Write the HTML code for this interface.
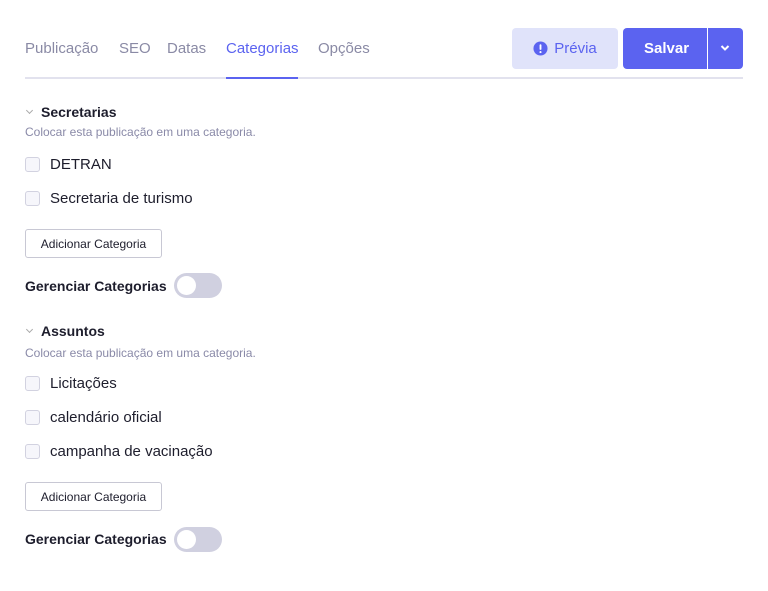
<!DOCTYPE html>
<html><head><style>
*{box-sizing:border-box;margin:0;padding:0}
body{width:768px;height:591px;background:#fff;font-family:"Liberation Sans",sans-serif;position:relative;overflow:hidden;color:#1d1d2c}
.a{position:absolute;white-space:nowrap}
.tab{font-size:15px;color:#8a8aa5;top:40px}
.line{left:25px;width:718px;top:77px;height:2px;background:#e2e2ee}
.act{left:226px;width:72px;top:77px;height:2px;background:#5b63f0}
.btn{border-radius:4px;font-size:15px;display:flex;align-items:center;justify-content:center;top:28px;height:41px}
.h{font-size:14px;font-weight:bold;color:#1d1d2c}
.sub{font-size:12px;color:#8a8aa8}
.cb{width:15px;height:15px;border:1px solid #d2d2e0;border-radius:3px;background:#f6f6fb;left:25px}
.lbl{font-size:15px;left:50px;color:#1d1d2c}
.add{left:25px;width:137px;height:29px;border:1px solid #c8c8d4;border-radius:3px;font-size:12px;display:flex;align-items:center;justify-content:center;color:#1d1d2c}
.tg{left:174px;width:48px;height:25px;border-radius:13px;background:#d0d0e0}
.tg:after{content:"";position:absolute;left:3px;top:3px;width:19px;height:19px;border-radius:50%;background:#fff}
.chev{left:27px;width:5px;height:5px;border-right:1.2px solid #aaa;border-bottom:1.2px solid #aaa;transform:rotate(45deg)}
</style></head><body>
<div class="a tab" style="left:25px">Publicação</div>
<div class="a tab" style="left:119px">SEO</div>
<div class="a tab" style="left:167px">Datas</div>
<div class="a tab" style="left:226px;color:#5b63f0">Categorias</div>
<div class="a tab" style="left:318px">Opções</div>
<div class="a line"></div><div class="a act"></div>
<div class="a btn" style="left:512px;width:106px;background:#e0e3fa;color:#5b63f0">
<svg width="15" height="15" viewBox="0 0 16 16" style="margin-right:6px"><circle cx="8" cy="8" r="7.5" fill="#5b63f0"/><rect x="7" y="3.5" width="2" height="6" rx="1" fill="#fff"/><circle cx="8" cy="11.8" r="1.1" fill="#fff"/></svg>Prévia</div>
<div class="a btn" style="left:623px;width:120px;background:#5b63f0;color:#fff;font-weight:bold;justify-content:flex-start;padding-left:21px">Salvar</div>
<div class="a" style="left:707px;top:28px;width:1px;height:41px;background:#fff"></div>
<svg class="a" style="left:720px;top:44px" width="10" height="8" viewBox="0 0 10 8"><path d="M1.5 2 L5 5.5 L8.5 2" stroke="#fff" stroke-width="2" fill="none"/></svg>

<div class="a chev" style="top:108px"></div>
<div class="a h" style="left:41px;top:104px">Secretarias</div>
<div class="a sub" style="left:25px;top:125px">Colocar esta publicação em uma categoria.</div>
<div class="a cb" style="top:157px"></div><div class="a lbl" style="top:156px">DETRAN</div>
<div class="a cb" style="top:191px"></div><div class="a lbl" style="top:190px">Secretaria de turismo</div>
<div class="a add" style="top:229px">Adicionar Categoria</div>
<div class="a h" style="left:25px;top:278px">Gerenciar Categorias</div>
<div class="a tg" style="top:273px"></div>

<div class="a chev" style="top:327px"></div>
<div class="a h" style="left:41px;top:323px">Assuntos</div>
<div class="a sub" style="left:25px;top:346px">Colocar esta publicação em uma categoria.</div>
<div class="a cb" style="top:376px"></div><div class="a lbl" style="top:375px">Licitações</div>
<div class="a cb" style="top:410px"></div><div class="a lbl" style="top:409px">calendário oficial</div>
<div class="a cb" style="top:444px"></div><div class="a lbl" style="top:443px">campanha de vacinação</div>
<div class="a add" style="top:482px">Adicionar Categoria</div>
<div class="a h" style="left:25px;top:531px">Gerenciar Categorias</div>
<div class="a tg" style="top:527px"></div>
</body></html>
